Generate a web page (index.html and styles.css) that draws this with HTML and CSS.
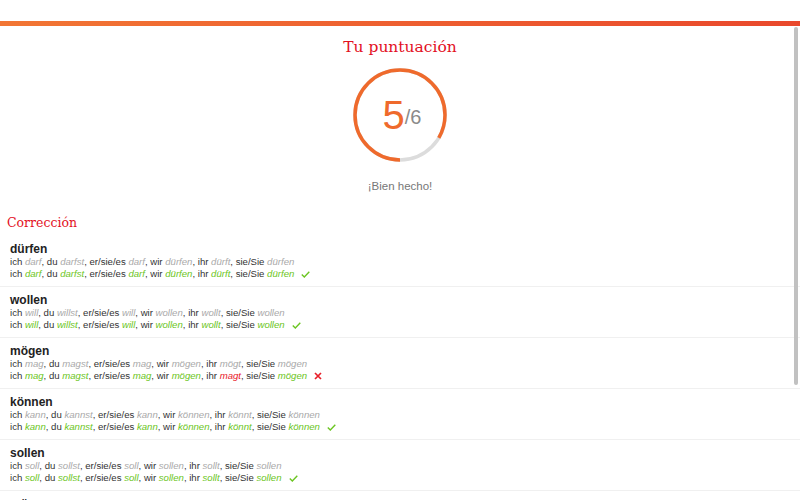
FILE: index.html
```html
<!DOCTYPE html>
<html lang="es">
<head>
    <meta charset="UTF-8">
    <meta name="viewport" content="width=device-width, initial-scale=1.0">
    <title>Tu puntuación</title>
    <link rel="stylesheet" href="styles.css">
</head>
<body>
    <div class="top-space"></div>
    <div class="accent-bar"></div>

    <!-- Score -->
    <div class="score">
        <h1 class="slab-title">Tu puntuación</h1>
        <div class="score-ring">
            <svg width="96" height="96" viewBox="0 0 96 96">
                <circle cx="48" cy="48" r="45" fill="none" stroke="#dcdcdc" stroke-width="3.5"/>
                <circle cx="48" cy="48" r="45" fill="none" stroke="#ef6a2c" stroke-width="3.5"
                        stroke-dasharray="235.6 282.7" transform="rotate(90 48 48)"/>
            </svg>
            <div class="score-value"><span class="score-big">5</span><span class="score-total">/6</span></div>
        </div>
        <p class="score-msg">¡Bien hecho!</p>
    </div>

    <!-- Correction list -->
    <h2 class="slab-title correction-title">Corrección</h2>
    <div class="rows">
        <div class="row">
            <div class="verb">dürfen</div>
            <div class="line">ich <i class="ans">darf</i>, du <i class="ans">darfst</i>, er/sie/es <i class="ans">darf</i>, wir <i class="ans">dürfen</i>, ihr <i class="ans">dürft</i>, sie/Sie <i class="ans">dürfen</i></div>
            <div class="line">ich <i class="ok">darf</i>, du <i class="ok">darfst</i>, er/sie/es <i class="ok">darf</i>, wir <i class="ok">dürfen</i>, ihr <i class="ok">dürft</i>, sie/Sie <i class="ok">dürfen</i><svg class="mark" width="9" height="7" viewBox="0 0 9 7"><path d="M0.8 3.6 L3.3 6 L8.3 0.8" fill="none" stroke="#6bc521" stroke-width="1.4"/></svg></div>
        </div>
        <div class="row">
            <div class="verb">wollen</div>
            <div class="line">ich <i class="ans">will</i>, du <i class="ans">willst</i>, er/sie/es <i class="ans">will</i>, wir <i class="ans">wollen</i>, ihr <i class="ans">wollt</i>, sie/Sie <i class="ans">wollen</i></div>
            <div class="line">ich <i class="ok">will</i>, du <i class="ok">willst</i>, er/sie/es <i class="ok">will</i>, wir <i class="ok">wollen</i>, ihr <i class="ok">wollt</i>, sie/Sie <i class="ok">wollen</i><svg class="mark" width="9" height="7" viewBox="0 0 9 7"><path d="M0.8 3.6 L3.3 6 L8.3 0.8" fill="none" stroke="#6bc521" stroke-width="1.4"/></svg></div>
        </div>
        <div class="row">
            <div class="verb">mögen</div>
            <div class="line">ich <i class="ans">mag</i>, du <i class="ans">magst</i>, er/sie/es <i class="ans">mag</i>, wir <i class="ans">mögen</i>, ihr <i class="ans">mögt</i>, sie/Sie <i class="ans">mögen</i></div>
            <div class="line">ich <i class="ok">mag</i>, du <i class="ok">magst</i>, er/sie/es <i class="ok">mag</i>, wir <i class="ok">mögen</i>, ihr <i class="bad">magt</i>, sie/Sie <i class="ok">mögen</i><svg class="mark" width="8" height="8" viewBox="0 0 8 8"><path d="M1 1 L7 7 M7 1 L1 7" fill="none" stroke="#e8202a" stroke-width="1.7"/></svg></div>
        </div>
        <div class="row">
            <div class="verb">können</div>
            <div class="line">ich <i class="ans">kann</i>, du <i class="ans">kannst</i>, er/sie/es <i class="ans">kann</i>, wir <i class="ans">können</i>, ihr <i class="ans">könnt</i>, sie/Sie <i class="ans">können</i></div>
            <div class="line">ich <i class="ok">kann</i>, du <i class="ok">kannst</i>, er/sie/es <i class="ok">kann</i>, wir <i class="ok">können</i>, ihr <i class="ok">könnt</i>, sie/Sie <i class="ok">können</i><svg class="mark" width="9" height="7" viewBox="0 0 9 7"><path d="M0.8 3.6 L3.3 6 L8.3 0.8" fill="none" stroke="#6bc521" stroke-width="1.4"/></svg></div>
        </div>
        <div class="row">
            <div class="verb">sollen</div>
            <div class="line">ich <i class="ans">soll</i>, du <i class="ans">sollst</i>, er/sie/es <i class="ans">soll</i>, wir <i class="ans">sollen</i>, ihr <i class="ans">sollt</i>, sie/Sie <i class="ans">sollen</i></div>
            <div class="line">ich <i class="ok">soll</i>, du <i class="ok">sollst</i>, er/sie/es <i class="ok">soll</i>, wir <i class="ok">sollen</i>, ihr <i class="ok">sollt</i>, sie/Sie <i class="ok">sollen</i><svg class="mark" width="9" height="7" viewBox="0 0 9 7"><path d="M0.8 3.6 L3.3 6 L8.3 0.8" fill="none" stroke="#6bc521" stroke-width="1.4"/></svg></div>
        </div>
        <div class="row">
            <div class="verb">müssen</div>
            <div class="line">ich <i class="ans">muss</i>, du <i class="ans">musst</i>, er/sie/es <i class="ans">muss</i>, wir <i class="ans">müssen</i>, ihr <i class="ans">müsst</i>, sie/Sie <i class="ans">müssen</i></div>
        </div>
    </div>

    <div class="scroll-thumb"></div>
</body>
</html>
```

FILE: styles.css
```css
html, body {
    overflow: hidden;
}
body {
    margin: 0;
    font-family: "Liberation Sans", Arial, sans-serif;
    color: #333;
    background-color: #fff;
}
.top-space {
    height: 21px;
}
.accent-bar {
    height: 5px;
    background: linear-gradient(to right, #f27634, #e9482c);
}
.slab-title {
    font-family: "DejaVu Serif", serif;
    font-weight: normal;
    color: #e3101e;
}
.score {
    text-align: center;
}
.score h1 {
    font-size: 15.5px;
    line-height: 20px;
    margin: 11px 0 0;
}
.score-ring {
    position: relative;
    width: 96px;
    height: 96px;
    margin: 10px auto 0;
}
.score-ring svg {
    display: block;
}
.score-value {
    position: absolute;
    top: 0;
    left: 0;
    right: 0;
    bottom: 0;
    display: flex;
    align-items: center;
    justify-content: center;
    padding-left: 4px;
}
.score-big {
    font-size: 40px;
    color: #ef6a2c;
    line-height: 1;
}
.score-total {
    font-size: 20px;
    color: #8a8a8a;
    margin-top: 4px;
}
.score-msg {
    font-size: 11.5px;
    line-height: 16px;
    color: #777;
    margin: 15px 0 0;
}
.correction-title {
    font-size: 12.5px;
    line-height: 18px;
    margin: 20px 0 0 7px;
}
.rows {
    margin-top: 4px;
}
.row {
    padding: 6px 10px;
    border-bottom: 1px solid #f0f0f0;
}
.verb {
    font-size: 12px;
    font-weight: bold;
    line-height: 14px;
    color: #222;
}
.line {
    font-size: 9.6px;
    line-height: 12px;
    color: #333;
    display: flex;
    align-items: center;
    white-space: pre;
}
.ans {
    color: #a9a9a9;
}
.ok {
    color: #6bc521;
}
.bad {
    color: #e8202a;
}
.mark {
    margin-left: 7px;
}
.scroll-thumb {
    position: fixed;
    top: 27px;
    right: 2px;
    width: 4px;
    height: 358px;
    border-radius: 2px;
    background-color: #c1c1c1;
}
```
